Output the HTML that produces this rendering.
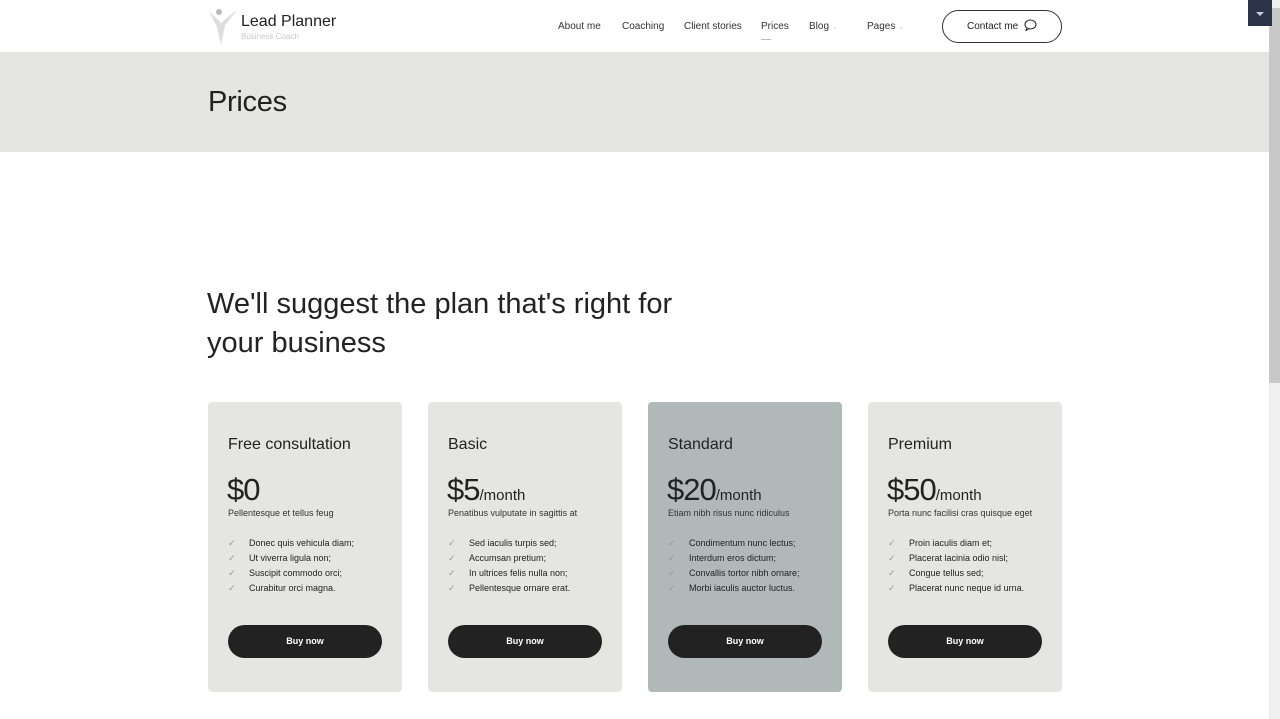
<!DOCTYPE html>
<html><head><style>
*{margin:0;padding:0;box-sizing:border-box}
body{width:1280px;height:719px;overflow:hidden;background:#fff;font-family:"Liberation Sans",sans-serif;color:#222;position:relative}
.hdr{position:absolute;left:0;top:0;width:1269px;height:53px;background:#fff;border-bottom:1px solid #e4e4e0}
.logo{position:absolute;left:241px;top:13px;font-size:16px;color:#222}
.sub{position:absolute;left:241px;top:32px;font-size:8px;color:#c8c8c8}
.nav{position:absolute;top:21px;font-size:10px;color:#333}
.contact{position:absolute;left:942px;top:10px;width:120px;height:33px;border:1px solid #333;border-radius:17px;font-size:10px;line-height:31px;padding-left:24px}
.band{position:absolute;left:0;top:53px;width:1269px;height:99px;background:#e5e5e1}
.band h1{position:absolute;left:208px;top:33px;font-size:29px;font-weight:normal;color:#222;letter-spacing:-.3px}
h2{position:absolute;left:207px;top:285px;font-size:29px;font-weight:normal;line-height:39px;letter-spacing:0;color:#222}
.card{position:absolute;top:402px;width:194px;height:290px;background:#e5e5e1;border-radius:4px}
.card.s{background:#b0b9b7}
.t{position:absolute;left:20px;top:34px;font-size:16px}
.p{position:absolute;left:19px;top:70px;font-size:31px;letter-spacing:-1px}
.p span{font-size:15px;letter-spacing:0}
.d{position:absolute;left:20px;top:106px;font-size:9px;color:#333}
ul{position:absolute;left:20px;top:134px;list-style:none;font-size:9px;line-height:15px;color:#222}
li:before{content:"✓";color:#999;display:inline-block;width:21px;font-size:9px}
.b{position:absolute;left:20px;top:223px;width:154px;height:33px;background:#222;border-radius:17px;color:#fff;font-size:9px;text-align:center;line-height:33px;font-weight:bold}
.sb{position:absolute;left:1269px;top:0;width:11px;height:719px;background:#f0f0f0}
.th{position:absolute;left:1269px;top:8px;width:11px;height:375px;background:#c8c8c8}
.dk{position:absolute;left:1248px;top:0;width:24px;height:26px;background:#2a3347}
</style></head><body>
<div class="hdr">
<svg style="position:absolute;left:207px;top:5px" width="34" height="42"><circle cx="12" cy="7" r="3" fill="#bbb"/><path d="M2 6 L14 18 L31 4 L18 20 L14 40 L10 22 Z" fill="#ddd"/></svg>
<div class="logo">Lead Planner</div><div class="sub">Business Coach</div>
<div class="nav" style="left:558px">About me</div>
<div class="nav" style="left:622px">Coaching</div>
<div class="nav" style="left:684px">Client stories</div>
<div class="nav" style="left:761px">Prices<div style="width:10px;height:1px;background:#bbb;margin:7px 0 0 0"></div></div>
<div class="nav" style="left:809px">Blog <span style="color:#ccc;font-size:7px">⌄</span></div>
<div class="nav" style="left:867px">Pages <span style="color:#ccc;font-size:7px">⌄</span></div>
<div class="contact">Contact me <svg width="13" height="12" style="vertical-align:-2px;margin-left:3px"><ellipse cx="6.5" cy="5.5" rx="5.5" ry="4.5" fill="none" stroke="#222"/><path d="M3 9 L2 11.5 L5 9.7" fill="#fff" stroke="#222"/></svg></div>
</div>
<div class="band"><h1>Prices</h1></div>
<h2>We'll suggest the plan that's right for<br>your business</h2>
<div class="card" style="left:208px"><div class="t">Free consultation</div><div class="p">$0</div><div class="d">Pellentesque et tellus feug</div><ul><li>Donec quis vehicula diam;</li><li>Ut viverra ligula non;</li><li>Suscipit commodo orci;</li><li>Curabitur orci magna.</li></ul><div class="b">Buy now</div></div>
<div class="card" style="left:428px"><div class="t">Basic</div><div class="p">$5<span>/month</span></div><div class="d">Penatibus vulputate in sagittis at</div><ul><li>Sed iaculis turpis sed;</li><li>Accumsan pretium;</li><li>In ultrices felis nulla non;</li><li>Pellentesque ornare erat.</li></ul><div class="b">Buy now</div></div>
<div class="card s" style="left:648px"><div class="t">Standard</div><div class="p">$20<span>/month</span></div><div class="d">Etiam nibh risus nunc ridiculus</div><ul><li>Condimentum nunc lectus;</li><li>Interdum eros dictum;</li><li>Convallis tortor nibh ornare;</li><li>Morbi iaculis auctor luctus.</li></ul><div class="b">Buy now</div></div>
<div class="card" style="left:868px"><div class="t">Premium</div><div class="p">$50<span>/month</span></div><div class="d">Porta nunc facilisi cras quisque eget</div><ul><li>Proin iaculis diam et;</li><li>Placerat lacinia odio nisl;</li><li>Congue tellus sed;</li><li>Placerat nunc neque id urna.</li></ul><div class="b">Buy now</div></div>
<div class="sb"></div><div class="th"></div>
<div class="dk"><svg width="24" height="26"><path d="M8 12 L16 12 L12 16 Z" fill="#ccd"/></svg></div>
</body></html>
